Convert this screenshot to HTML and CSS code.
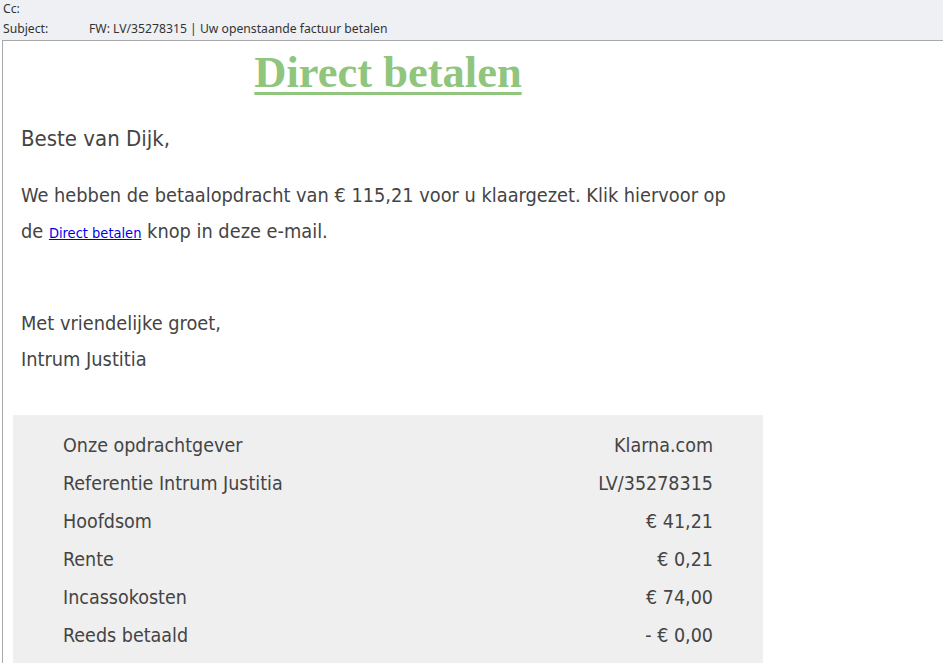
FILE: index.html
```html
<!DOCTYPE HTML>
<html>
	<head>
		<meta charset='utf-8' />
		<title>FW: LV/35278315 | Uw openstaande factuur betalen</title>
		<link rel="stylesheet" href="styles.css">
	</head>
	<body>
		<div class='header'>
			<div class='field'><span class='label'>Cc:</span></div>
			<div class='field'><span class='label'>Subject:</span><span class='value'>FW: LV/35278315 | Uw openstaande factuur betalen</span></div>
		</div>
		<div class='message'>
			<div class='mail'>
				<h1 class='title'><a href='#'>Direct betalen</a></h1>
				<p class='greeting'>Beste van Dijk,</p>
				<p class='text'>We hebben de betaalopdracht van &euro; 115,21 voor u klaargezet. Klik hiervoor op de <a class='link' href='#'>Direct betalen</a> knop in deze e-mail.</p>
				<p class='text closing'>Met vriendelijke groet,<br>Intrum Justitia</p>
				<table class='details'>
					<tr><td>Onze opdrachtgever</td><td class='amount'>Klarna.com</td></tr>
					<tr><td>Referentie Intrum Justitia</td><td class='amount'>LV/35278315</td></tr>
					<tr><td>Hoofdsom</td><td class='amount'>&euro; 41,21</td></tr>
					<tr><td>Rente</td><td class='amount'>&euro; 0,21</td></tr>
					<tr><td>Incassokosten</td><td class='amount'>&euro; 74,00</td></tr>
					<tr><td>Reeds betaald</td><td class='amount'>- &euro; 0,00</td></tr>
				</table>
			</div>
		</div>
	</body>
</html>
```

FILE: styles.css
```css
html, body{margin:0;padding:0;}
body{
	background:#fff;
	overflow:hidden;
	height:663px;
}
p{margin:0;}

.header{
	background:#eef0f3;
	height:40px;
	padding:0 0 0 3px;
	font-family:"Noto Sans", sans-serif;
	font-size:12.2px;
	color:#333;
}
.header .field{
	height:20px;
	line-height:18px;
	display:flex;
}
.header .label{
	width:86px;
}

.message{
	margin-left:2px;
	border-top:1px solid #a9a9a9;
	border-left:1px solid #a9a9a9;
	height:622px;
	background:#fff;
}
.mail{
	width:750px;
	padding:0 0 0 10px;
	font-family:"DejaVu Sans Condensed", "DejaVu Sans", sans-serif;
	color:#444;
}
.title{
	margin:0;
	padding-top:5px;
	height:60px;
	text-align:center;
	font-family:"Liberation Serif", serif;
	font-size:44.5px;
	font-weight:bold;
	line-height:52px;
}
.title a{
	color:#8fc57c;
	text-decoration:underline;
	text-decoration-thickness:3px;
	text-underline-offset:5px;
}
.greeting{
	padding:15px 0 0 8px;
	font-size:22px;
	line-height:36px;
}
.text{
	padding:21px 0 0 8px;
	font-size:19.8px;
	line-height:36px;
	width:720px;
}
.text .link{
	font-size:14.5px;
	line-height:1;
	color:#0000ee;
}
.closing{
	padding-top:56px;
}
.details{
	margin-top:37px;
	width:750px;
	background:#efefef;
	border-collapse:collapse;
	font-size:19.5px;
}
.details td{
	padding:0 50px;
	height:38px;
}
.details tr:first-child td{
	padding-top:11px;
}
.details tr:last-child td{
	padding-bottom:30px;
}
.details .amount{
	text-align:right;
}
```
